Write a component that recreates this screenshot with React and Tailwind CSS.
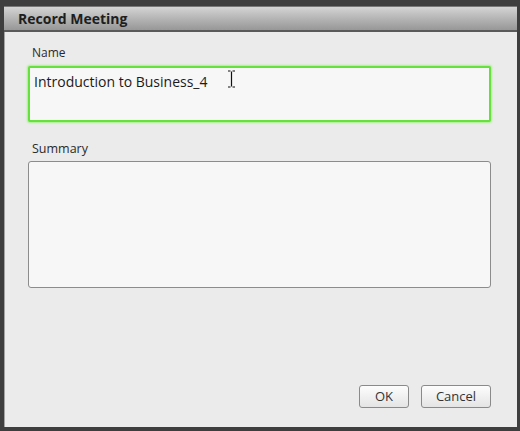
export default function App() {
  return (
    <div className="w-[520px] h-[431px] bg-[#3e3e3e] pt-[6px] pl-[4px] pr-[3px] pb-[4px] flex flex-col font-['Open_Sans','Noto_Sans',sans-serif]">
      {/* title bar */}
      <div className="h-[26px] shrink-0 flex items-center pl-[14px] border-t border-[#777] border-b-2 border-b-[#5a5a5a] bg-gradient-to-b from-[#d4d4d4] to-[#979797]">
        <span className="text-[14px] font-bold text-[#1e1e1e]">Record Meeting</span>
      </div>

      {/* body */}
      <div className="flex-1 bg-[#ebebeb] border-l border-[#a3a3a3] pl-[23px] pr-[26px] pt-[13px] flex flex-col">
        <label className="ml-[4px] h-[16px] text-[12px] leading-[16px] text-[#2a2a2a]">Name</label>
        <div className="relative mt-[5px] h-[56px] rounded-[2px] border-2 border-[#66e03c] bg-[#f7f7f7] shadow-[0_0_2px_1px_#a6f08a] pl-[4px] pt-[1px]">
          <span className="text-[14px] leading-[20px] text-[#1a1a1a]">Introduction to Business_4</span>
          <svg className="absolute left-[197px] top-[2px]" width="9" height="18" viewBox="0 0 9 18">
            <path d="M1 1h2.5M5.5 1H8M4.5 1.5v15M1 17h2.5M5.5 17H8" stroke="#111" strokeWidth="1.2" fill="none" />
          </svg>
        </div>

        <label className="ml-[4px] mt-[19px] h-[16px] text-[12.5px] leading-[16px] text-[#2a2a2a]">Summary</label>
        <div className="mt-[4px] h-[127px] rounded-[3px] border border-[#8c8c8c] bg-[#f7f7f7]" />

        <div className="mt-[97px] flex justify-end gap-[12px]">
          <button className="w-[50px] h-[23px] rounded-[3px] border border-[#8a8a8a] bg-gradient-to-b from-[#fdfdfd] to-[#e4e4e4] text-[13px] text-[#333]">
            OK
          </button>
          <button className="w-[70px] h-[23px] rounded-[3px] border border-[#8a8a8a] bg-gradient-to-b from-[#fdfdfd] to-[#e4e4e4] text-[13px] text-[#333]">
            Cancel
          </button>
        </div>
      </div>
    </div>
  )
}
